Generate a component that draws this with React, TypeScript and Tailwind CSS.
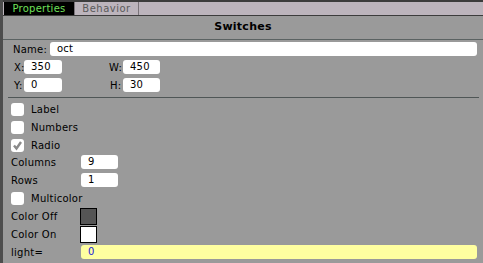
const FONT = { fontFamily: '"DejaVu Sans", Verdana, sans-serif' };

function TextBox({ value, className }: { value: string; className: string }) {
  return (
    <div
      className={`h-[14px] rounded-[3px] bg-white pl-[7px] text-[10px] leading-[14px] text-black ${className}`}
    >
      {value}
    </div>
  );
}

function Check({ label, checked = false }: { label: string; checked?: boolean }) {
  return (
    <div className="flex h-[18px] items-center pl-[8px]">
      <div className="flex h-[13px] w-[13px] items-center justify-center rounded-[3px] bg-white">
        {checked && (
          <svg width="11" height="11" viewBox="0 0 11 11">
            <polyline
              points="2,5.5 4.5,8.5 9,2"
              fill="none"
              stroke="#8a8a8a"
              strokeWidth="2.4"
            />
          </svg>
        )}
      </div>
      <span className="ml-[7px] text-[10px] text-black">{label}</span>
    </div>
  );
}

function Field({ label, value, className = "mt-[4px]" }: { label: string; value: string; className?: string }) {
  return (
    <div className={`flex h-[14px] items-center pl-[8px] ${className}`}>
      <span className="w-[70px] text-[10px] text-black">{label}</span>
      <TextBox value={value} className="w-[37px]" />
    </div>
  );
}

function Swatch({ label, color, className }: { label: string; color: string; className: string }) {
  return (
    <div className={`flex h-[17px] items-center pl-[8px] ${className}`}>
      <span className="w-[69px] text-[10px] text-black">{label}</span>
      <div className={`h-[17px] w-[17px] border border-black ${color}`} />
    </div>
  );
}

export default function App() {
  return (
    <div
      className="flex h-[263px] w-[483px] flex-col overflow-hidden border-l-[3px] border-[#4d4d4d] bg-[#9a9a9a] tracking-[0.25px]"
      style={FONT}
    >
      {/* Tabs */}
      <div className="flex h-[16px] border-t-2 border-b border-[#3c3c3c] bg-[#bcb4bc]">
        <div className="ml-px flex w-[70px] items-center justify-center bg-black text-[10px] text-[#6fe05a]">
          Properties
        </div>
        <div className="flex w-[65px] items-center justify-center border-l border-r border-[#7a747a] text-[10px] tracking-[0.5px] text-[#5a5a5a]">
          Behavior
        </div>
      </div>

      {/* Title */}
      <div className="flex h-[24px] items-center justify-center border-b border-[#5b6262] text-[11px] font-bold text-black">
        Switches
      </div>

      {/* Geometry */}
      <div className="mt-[2px] flex h-[14px] items-center pl-[10px] pr-[6px]">
        <span className="w-[37px] text-[10px] text-black">Name:</span>
        <TextBox value="oct" className="flex-1 pl-[6px]" />
      </div>
      <div className="mt-[4px] flex h-[14px] items-center pl-[11px]">
        <span className="w-[10px] text-[10px] text-black">X:</span>
        <TextBox value="350" className="w-[38px]" />
        <span className="ml-[47px] w-[14px] text-[10px] text-black">W:</span>
        <TextBox value="450" className="w-[37px]" />
      </div>
      <div className="mt-[4px] flex h-[14px] items-center pl-[11px]">
        <span className="w-[10px] text-[10px] text-black">Y:</span>
        <TextBox value="0" className="w-[38px]" />
        <span className="ml-[48px] w-[13px] text-[10px] text-black">H:</span>
        <TextBox value="30" className="w-[37px]" />
      </div>
      <div className="mt-[5px] ml-[5px] mr-[4px] h-px bg-[#4f5656]" />

      {/* Options */}
      <div className="mt-[2px]">
        <Check label="Label" />
        <Check label="Numbers" />
        <Check label="Radio" checked />
      </div>
      <Field label="Columns" value="9" className="mt-px" />
      <Field label="Rows" value="1" />
      <div className="mt-[2px]">
        <Check label="Multicolor" />
      </div>
      <Swatch label="Color Off" color="bg-[#555555]" className="mt-[1px]" />
      <Swatch label="Color On" color="bg-white" className="mt-px" />
      <div className="mt-[2px] flex h-[14px] items-center pl-[8px] pr-[6px]">
        <span className="w-[70px] text-[10px] text-black">light=</span>
        <div className="h-[14px] flex-1 rounded-[3px] bg-[#ffffa0] pl-[7px] text-[10px] leading-[14px] text-[#1a1ad8]">
          0
        </div>
      </div>
    </div>
  );
}
